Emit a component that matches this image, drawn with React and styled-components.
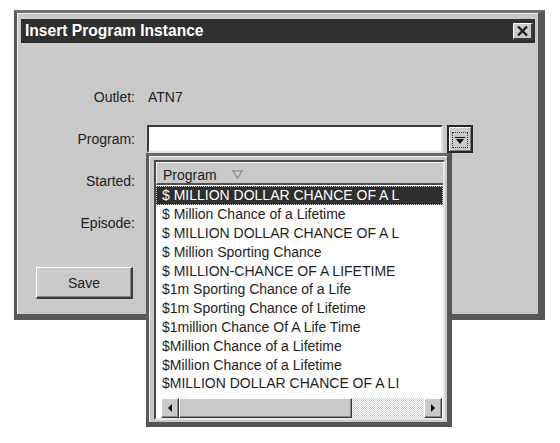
import React from "react";
import styled, { createGlobalStyle } from "styled-components";

const Global = createGlobalStyle`
  body {
    margin: 0;
    background: #fff;
    font-family: "Liberation Sans", Arial, sans-serif;
  }
`;

const Page = styled.div`
  min-height: 443px;
  box-sizing: border-box;
  padding: 10px 0 0 14px;
`;

const Window = styled.div`
  position: relative;
  width: 531px;
  height: 310px;
  box-sizing: border-box;
  border-top: 3px solid #727272;
  border-left: 3px solid #585858;
  border-right: 7px solid #585858;
  border-bottom: 6px solid #585858;
  background: #c9c9c9;
`;

const Inner = styled.div`
  height: 100%;
  box-sizing: border-box;
  border-top: 1px solid #f2f2f2;
  border-left: 1px solid #f2f2f2;
  padding: 5px 3px 0 3px;
  display: flex;
  flex-direction: column;
`;

const TitleBar = styled.div`
  height: 24px;
  background: #2f2f2f;
  display: flex;
  align-items: center;
  justify-content: space-between;
  padding: 0 2px 0 4px;
`;

const Title = styled.span`
  color: #fff;
  font-weight: bold;
  font-size: 15.6px;
`;

const CloseButton = styled.div`
  width: 20px;
  height: 17px;
  box-sizing: border-box;
  background: #cacaca;
  border-top: 1px solid #fff;
  border-left: 1px solid #fff;
  border-right: 2px solid #3a3a3a;
  border-bottom: 2px solid #3a3a3a;
  display: flex;
  align-items: center;
  justify-content: center;
`;

const Body = styled.div`
  flex: 1;
  padding-top: 40px;
  display: flex;
  flex-direction: column;
`;

const Form = styled.div`
  display: grid;
  grid-template-columns: 114px 1fr;
  column-gap: 12px;
  row-gap: 14px;
  grid-auto-rows: 28px;
`;

const Label = styled.div`
  font-size: 14px;
  color: #222;
  text-align: right;
  align-self: center;
`;

const Value = styled.div`
  font-size: 14px;
  color: #222;
  align-self: center;
  padding-left: 1px;
`;

const Combo = styled.div`
  position: relative;
  z-index: 5;
  display: flex;
  gap: 4px;
`;

const TextBox = styled.div`
  width: ${(p) => p.$w}px;
  height: 28px;
  box-sizing: border-box;
  background: #fff;
  border-top: 2px solid #3a3a3a;
  border-left: 2px solid #3a3a3a;
  border-right: 2px solid #e4e4e4;
  border-bottom: 2px solid #e4e4e4;
`;

const DropButton = styled.div`
  width: 26px;
  height: 28px;
  box-sizing: border-box;
  border: 2px solid #262626;
  background: #cacaca;
  box-shadow: inset 1px 1px 0 #fff, inset -1px -1px 0 #808080;
  display: flex;
  align-items: center;
  justify-content: center;
`;

const Focus = styled.div`
  width: 16px;
  height: 16px;
  box-sizing: border-box;
  border: 1px dotted #333;
  display: flex;
  align-items: center;
  justify-content: center;
  margin-top: 2px;
`;

const SaveButton = styled.div`
  margin: 30px 0 0 15px;
  width: 97px;
  height: 32px;
  box-sizing: border-box;
  background: #cacaca;
  border-top: 1px solid #fff;
  border-left: 1px solid #fff;
  border-right: 2px solid #3c3c3c;
  border-bottom: 2px solid #3c3c3c;
  box-shadow: inset -1px -1px 0 #8a8a8a;
  display: flex;
  align-items: center;
  justify-content: center;
  font-size: 14px;
  color: #222;
`;

const Popup = styled.div`
  position: absolute;
  top: 100%;
  left: -1px;
  z-index: 10;
  width: 306px;
  height: 274px;
  box-sizing: border-box;
  background: #c9c9c9;
  border-top: 3px solid #686868;
  border-left: 3px solid #5c5c5c;
  border-right: 5px solid #555;
  border-bottom: 5px solid #555;
`;

const PopupInner = styled.div`
  height: 100%;
  box-sizing: border-box;
  border-top: 1px solid #f0f0f0;
  border-left: 1px solid #f0f0f0;
  padding: 3px 2px 2px 4px;
`;

const ListFrame = styled.div`
  height: 100%;
  box-sizing: border-box;
  background: #fff;
  border-top: 2px solid #4a4a4a;
  border-left: 2px solid #4a4a4a;
  border-right: 2px solid #e6e6e6;
  border-bottom: 2px solid #e6e6e6;
  display: flex;
  flex-direction: column;
`;

const Header = styled.div`
  height: 23px;
  flex-shrink: 0;
  box-sizing: border-box;
  background: #c9c9c9;
  border-top: 1px solid #f4f4f4;
  border-left: 1px solid #f4f4f4;
  border-bottom: 2px solid #505050;
  display: flex;
  align-items: center;
  gap: 15px;
  padding: 3px 0 0 6px;
  font-size: 14px;
  color: #222;
`;

const Rows = styled.div`
  flex: 1;
  padding-top: 1px;
`;

const Row = styled.div`
  height: 18.8px;
  box-sizing: border-box;
  display: flex;
  align-items: center;
  padding-left: 5px;
  font-size: 14px;
  white-space: nowrap;
  overflow: hidden;
  color: ${(p) => (p.$selected ? "#fff" : "#1e1e1e")};
  background: ${(p) => (p.$selected ? "#2e2e2e" : "transparent")};
  border: 1px dotted ${(p) => (p.$selected ? "#c8c8c8" : "transparent")};
`;

const ScrollBar = styled.div`
  height: 20px;
  flex-shrink: 0;
  margin: 0 1px 0 5px;
  display: flex;
`;

const ArrowButton = styled.div`
  width: 18px;
  box-sizing: border-box;
  background: #c9c9c9;
  border-top: 1px solid #fff;
  border-left: 1px solid #fff;
  border-right: 1px solid #3a3a3a;
  border-bottom: 1px solid #3a3a3a;
  box-shadow: inset -1px -1px 0 #8a8a8a;
  display: flex;
  align-items: center;
  justify-content: center;
`;

const Thumb = styled(ArrowButton)`
  width: 173px;
`;

const Track = styled.div`
  flex: 1;
  background-color: #fff;
  background-image: repeating-conic-gradient(#cfcfcf 0 25%, #fff 0 50%);
  background-size: 2px 2px;
`;

const programs = [
  "$ MILLION DOLLAR CHANCE OF A L",
  "$ Million Chance of a Lifetime",
  "$ MILLION DOLLAR CHANCE OF A L",
  "$ Million Sporting Chance",
  "$ MILLION-CHANCE OF A LIFETIME",
  "$1m Sporting Chance of a Life",
  "$1m Sporting Chance of Lifetime",
  "$1million Chance Of A Life Time",
  "$Million Chance of a Lifetime",
  "$Million Chance of a Lifetime",
  "$MILLION DOLLAR CHANCE OF A LI",
];

const App = () => {
  return (
    <Page>
      <Global />
      <Window>
        <Inner>
          <TitleBar>
            <Title>Insert Program Instance</Title>
            <CloseButton>
              <svg width="11" height="10" viewBox="0 0 11 10">
                <path d="M1 0.5 L10 9.5 M10 0.5 L1 9.5" stroke="#1a1a1a" strokeWidth="2.2" />
              </svg>
            </CloseButton>
          </TitleBar>
          <Body>
            <Form>
              <Label>Outlet:</Label>
              <Value>ATN7</Value>

              <Label>Program:</Label>
              <Combo>
                <TextBox $w={296} />
                <DropButton>
                  <Focus>
                    <svg width="10" height="7" viewBox="0 0 10 7">
                      <path d="M0 0 H10 V1 H0 Z M1 2 H9 L5 7 Z" fill="#111" />
                    </svg>
                  </Focus>
                </DropButton>
                <Popup>
                  <PopupInner>
                    <ListFrame>
                      <Header>
                        <span>Program</span>
                        <svg width="11" height="9" viewBox="0 0 11 9">
                          <path d="M0.8 0.8 H10.2 L5.5 8.3 Z" fill="none" stroke="#8c8c8c" strokeWidth="1.2" />
                        </svg>
                      </Header>
                      <Rows>
                        {programs.map((p, i) => (
                          <Row key={i} $selected={i === 0}>
                            {p}
                          </Row>
                        ))}
                      </Rows>
                      <ScrollBar>
                        <ArrowButton>
                          <svg width="4" height="8" viewBox="0 0 4 8">
                            <path d="M4 0 V8 L0 4 Z" fill="#111" />
                          </svg>
                        </ArrowButton>
                        <Thumb />
                        <Track />
                        <ArrowButton>
                          <svg width="4" height="8" viewBox="0 0 4 8">
                            <path d="M0 0 V8 L4 4 Z" fill="#111" />
                          </svg>
                        </ArrowButton>
                      </ScrollBar>
                    </ListFrame>
                  </PopupInner>
                </Popup>
              </Combo>

              <Label>Started:</Label>
              <TextBox $w={200} />

              <Label>Episode:</Label>
              <TextBox $w={200} />
            </Form>
            <SaveButton>Save</SaveButton>
          </Body>
        </Inner>
      </Window>
    </Page>
  );
};

export default App;
